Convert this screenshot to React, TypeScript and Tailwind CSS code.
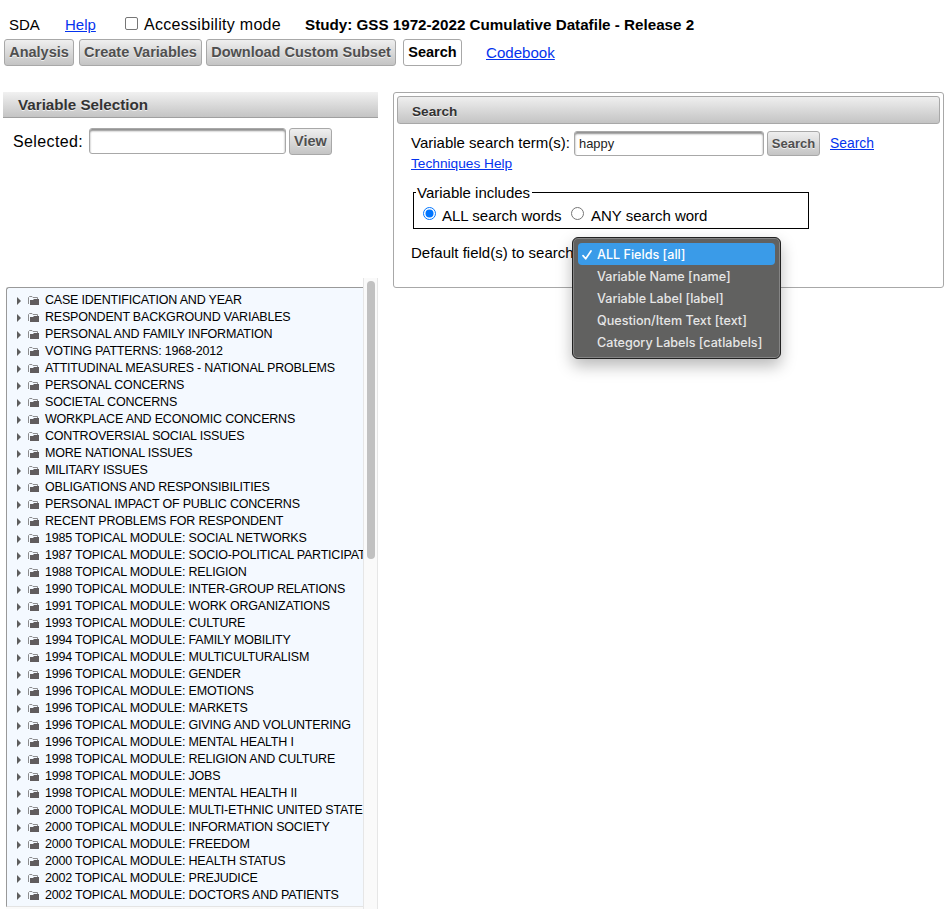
import React from 'react';

const categories: string[] = [
  'CASE IDENTIFICATION AND YEAR',
  'RESPONDENT BACKGROUND VARIABLES',
  'PERSONAL AND FAMILY INFORMATION',
  'VOTING PATTERNS: 1968-2012',
  'ATTITUDINAL MEASURES - NATIONAL PROBLEMS',
  'PERSONAL CONCERNS',
  'SOCIETAL CONCERNS',
  'WORKPLACE AND ECONOMIC CONCERNS',
  'CONTROVERSIAL SOCIAL ISSUES',
  'MORE NATIONAL ISSUES',
  'MILITARY ISSUES',
  'OBLIGATIONS AND RESPONSIBILITIES',
  'PERSONAL IMPACT OF PUBLIC CONCERNS',
  'RECENT PROBLEMS FOR RESPONDENT',
  '1985 TOPICAL MODULE: SOCIAL NETWORKS',
  '1987 TOPICAL MODULE: SOCIO-POLITICAL PARTICIPATION',
  '1988 TOPICAL MODULE: RELIGION',
  '1990 TOPICAL MODULE: INTER-GROUP RELATIONS',
  '1991 TOPICAL MODULE: WORK ORGANIZATIONS',
  '1993 TOPICAL MODULE: CULTURE',
  '1994 TOPICAL MODULE: FAMILY MOBILITY',
  '1994 TOPICAL MODULE: MULTICULTURALISM',
  '1996 TOPICAL MODULE: GENDER',
  '1996 TOPICAL MODULE: EMOTIONS',
  '1996 TOPICAL MODULE: MARKETS',
  '1996 TOPICAL MODULE: GIVING AND VOLUNTERING',
  '1996 TOPICAL MODULE: MENTAL HEALTH I',
  '1998 TOPICAL MODULE: RELIGION AND CULTURE',
  '1998 TOPICAL MODULE: JOBS',
  '1998 TOPICAL MODULE: MENTAL HEALTH II',
  '2000 TOPICAL MODULE: MULTI-ETHNIC UNITED STATES',
  '2000 TOPICAL MODULE: INFORMATION SOCIETY',
  '2000 TOPICAL MODULE: FREEDOM',
  '2000 TOPICAL MODULE: HEALTH STATUS',
  '2002 TOPICAL MODULE: PREJUDICE',
  '2002 TOPICAL MODULE: DOCTORS AND PATIENTS',
];

const fields = [
  'ALL Fields [all]',
  'Variable Name [name]',
  'Variable Label [label]',
  'Question/Item Text [text]',
  'Category Labels [catlabels]',
];

const button =
  'flex items-center justify-center rounded-[3px] border border-[#a8a8a8] bg-linear-to-b from-[#efefef] to-[#c4c4c4] font-bold text-[#4f4f4f] [text-shadow:0_1px_0_rgba(255,255,255,0.7)]';
const field =
  'rounded-[3px] border border-[#a8a8a8] bg-white text-[#222] outline-none shadow-[inset_0_2px_2px_#8f8f8f]';
const link = 'text-[#0433ee] underline';

function Folder() {
  return (
    <svg className="ml-[7px] h-[9px] w-[11px] shrink-0" viewBox="0 0 11 9">
      <path d="M0.5 8V1.5L1.5 0.5H4L5 1.5H9.5V3" fill="none" stroke="#8d8d8f" />
      <path d="M2 9V4H5L6 3H11V9Z" fill="#605c5e" />
    </svg>
  );
}

function Radio({ checked }: { checked?: boolean }) {
  return (
    <svg className="size-[13px] shrink-0" viewBox="0 0 13 13">
      <circle cx="6.5" cy="6.5" r="6" fill="#fff" stroke={checked ? '#0075ff' : '#767676'} />
      {checked && <circle cx="6.5" cy="6.5" r="4" fill="#0075ff" />}
    </svg>
  );
}

function VariableSelection() {
  return (
    <section className="ml-[3px] flex h-[817px] w-[375px] shrink-0 flex-col">
      <h2 className="h-[26px] border-b border-[#a0a0a0] bg-linear-to-b from-[#f1f1f1] to-[#c4c4c4] pl-[15px] text-[15.2px] leading-[26px] font-bold text-[#333] [text-shadow:0_1px_0_rgba(255,255,255,0.7)]">
        Variable Selection
      </h2>
      <div className="mt-[9px] flex h-[28px] pl-[10px]">
        <label htmlFor="selected" className="w-[76px] text-[16px] leading-[29px] tracking-[0.38px]">
          Selected:
        </label>
        <input id="selected" className={`${field} mt-px h-[26px] w-[197px]`} />
        <button className={`${button} mt-px ml-[3px] h-[27px] w-[43px] text-[14.5px]`}>View</button>
      </div>
      <div className="mt-[123px] flex h-[631px] w-[375px]">
        <div className="mt-[9px] ml-[3px] flex w-[357px] flex-col">
          <ul className="h-[620px] overflow-hidden rounded-tl-[3px] border-t border-l border-[#999] border-b border-b-[#e4e4e4] bg-[#f4f9ff] pt-[4px] pl-[10px] text-[12.5px] tracking-[-0.2px] text-black">
            {categories.map((name) => (
              <li key={name} className="flex h-[17px] items-center whitespace-nowrap">
                <svg className="h-[8px] w-[4px] shrink-0" viewBox="0 0 4 8">
                  <path d="M0 0L4 4L0 8Z" fill="#5d5d5d" />
                </svg>
                <Folder />
                <span className="ml-[6px] leading-[17px]">{name}</span>
              </li>
            ))}
          </ul>
          <div className="flex-1 bg-[#fafafa]" />
        </div>
        <div className="flex w-[15px] justify-center border-x border-[#e6e6e6] bg-[#fafafa] pt-[3px]">
          <div className="h-[278px] w-[8px] rounded-full bg-[#c1c1c1]" />
        </div>
      </div>
    </section>
  );
}

function FieldMenu() {
  return (
    <ul className="absolute top-[144px] left-[178px] h-[122px] w-[209px] rounded-[6px] border border-[#222] bg-[#616160] px-[5px] pt-[5px] font-['Inter','Liberation_Sans',sans-serif] text-[12.6px] font-medium text-[#e6e6e6] shadow-[inset_0_0_0_1px_#858585,0_7px_16px_rgba(0,0,0,0.28)]">
      {fields.map((name, i) => (
        <li
          key={name}
          className={`flex h-[22px] items-center pt-px whitespace-nowrap ${i === 0 ? 'rounded-[4px] bg-[#3a9be8] text-white' : ''}`}
        >
          <span className="flex w-[19px] shrink-0 pl-[4px]">
            {i === 0 && (
              <svg className="h-[10px] w-[10px]" viewBox="0 0 10 10">
                <path d="M1 5.6L3.7 8.8L9 1" fill="none" stroke="#fff" strokeWidth="1.7" strokeLinecap="round" strokeLinejoin="round" />
              </svg>
            )}
          </span>
          <span className="pt-px">{name}</span>
        </li>
      ))}
    </ul>
  );
}

function SearchPanel() {
  return (
    <section className="relative ml-[15px] h-[196px] w-[551px] rounded-[3px] border border-[#a8a8a8] p-[3px]">
      <h2 className="h-[28px] rounded-[3px] border border-[#a8a8a8] bg-linear-to-b from-[#efefef] to-[#c4c4c4] pl-[14px] text-[13.6px] leading-[29px] font-bold text-[#333] [text-shadow:0_1px_0_rgba(255,255,255,0.7)]">
        Search
      </h2>
      <div className="mt-[7px] flex h-[25px] pl-[14px] whitespace-nowrap">
        <label htmlFor="term" className="w-[163px] text-[15px] leading-[24px]">
          Variable search term(s):
        </label>
        <input id="term" defaultValue="happy" className={`${field} h-[25px] w-[190px] px-[4px] text-[12.9px]`} />
        <button className={`${button} ml-[3px] h-[25px] w-[53px] text-[13px]`}>Search</button>
        <a className={`${link} ml-[10px] text-[13.9px] leading-[25px]`}>Search</a>
      </div>
      <a className={`${link} ml-[14px] block w-max text-[13.7px] leading-[16px]`}>Techniques Help</a>
      <fieldset className="mt-[12px] ml-[16px] h-[45px] w-[396px] border border-black pl-[9px] text-[15px]">
        <legend className="-ml-[7px] h-[17px] pr-[2px] pl-px leading-[18px]">Variable includes</legend>
        <div className="flex h-[24px] items-start whitespace-nowrap">
          <span className="mt-[6px]">
            <Radio checked />
          </span>
          <span className="mt-[5px] ml-[6px] w-[129px] leading-[20px]">ALL search words</span>
          <span className="mt-[6px]">
            <Radio />
          </span>
          <span className="mt-[5px] ml-[7px] leading-[20px]">ANY search word</span>
        </div>
      </fieldset>
      <p className="mt-[14px] ml-[14px] text-[15px] leading-[20px]">Default field(s) to search:</p>
      <FieldMenu />
    </section>
  );
}

export default function App() {
  return (
    <div className="h-[909px] w-[947px] overflow-hidden bg-white font-['Liberation_Sans',Arial,sans-serif] text-black">
      <header className="flex h-[39px] items-start pt-[15px] pl-[9px] text-[15px] leading-[20px] whitespace-nowrap">
        <span className="w-[56px]">SDA</span>
        <a className={`${link} w-[60px]`}>Help</a>
        <span className="mt-[2px] size-[13px] shrink-0 rounded-[2px] border border-[#767676]" />
        <span className="ml-[6px] w-[161px] text-[16px] tracking-[0.3px]">Accessibility mode</span>
        <strong className="text-[15.2px]">Study: GSS 1972-2022 Cumulative Datafile - Release 2</strong>
      </header>
      <nav className="flex h-[27px] pl-[4px] text-[14.5px] whitespace-nowrap">
        <button className={`${button} w-[70px]`}>Analysis</button>
        <button className={`${button} ml-[5px] w-[123px]`}>Create Variables</button>
        <button className={`${button} ml-[4px] w-[190px]`}>Download Custom Subset</button>
        <button className="ml-[7px] w-[59px] rounded-[3px] border border-[#a8a8a8] bg-white font-bold">Search</button>
        <a className={`${link} ml-[24px] text-[15.1px] leading-[27px]`}>Codebook</a>
      </nav>
      <main className="mt-[26px] flex items-start">
        <VariableSelection />
        <SearchPanel />
      </main>
    </div>
  );
}
